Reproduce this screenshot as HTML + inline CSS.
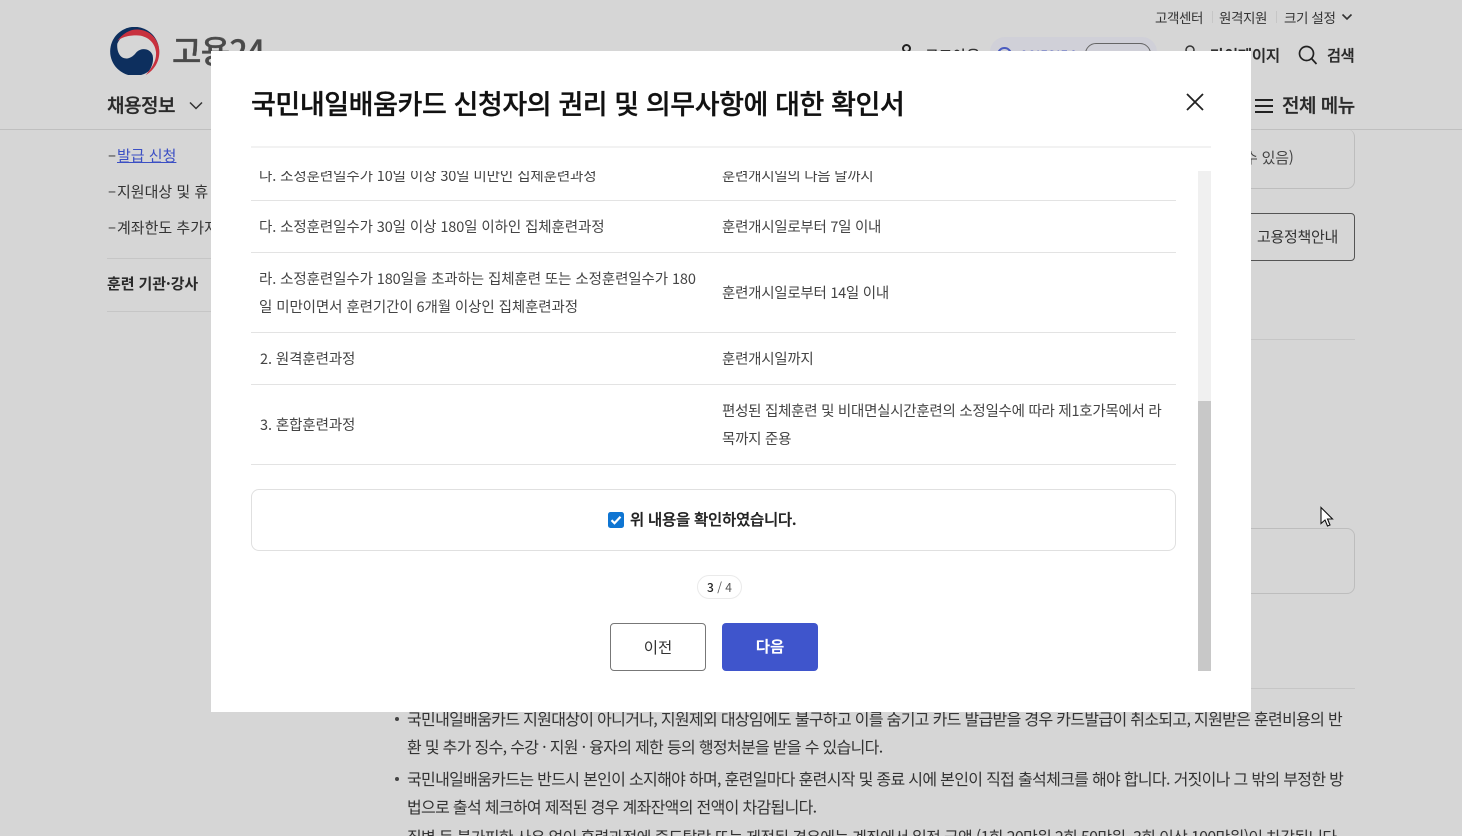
<!DOCTYPE html>
<html lang="ko"><head><meta charset="utf-8"><style>
html,body{margin:0;padding:0;width:1462px;height:836px;overflow:hidden;background:#d6d6d6}
body{position:relative;font-family:"Liberation Sans","Noto Sans CJK KR",sans-serif;color:#2a2a2a}
*{box-sizing:border-box}
.t{position:absolute;white-space:nowrap;height:28px;line-height:28px;font-family:"Noto Sans CJK KR","Liberation Sans",sans-serif}
.l{position:absolute;background:#e3e3e3;height:1px}
.b{position:absolute;background:#bfbfbf;height:1px}
.m{font-size:14.5px;color:#444;letter-spacing:-.1px}
.r{font-size:14.5px;color:#444;letter-spacing:-.27px}
.bt{font-size:16px;color:#333;letter-spacing:-.68px}
.tp{font-size:13.5px;color:#333;letter-spacing:-.4px}
.s{-webkit-text-stroke:.3px currentColor}
</style></head><body>
<!-- background page -->
<div class="t tp" style="left:1155px;top:3px">고객센터</div>
<div class="b" style="left:1212px;top:11px;width:1px;height:12px;background:#c6c6c6"></div>
<div class="t tp" style="left:1219px;top:3px">원격지원</div>
<div class="b" style="left:1276px;top:11px;width:1px;height:12px;background:#c6c6c6"></div>
<div class="t tp" style="left:1284px;top:3px">크기 설정</div>
<svg style="position:absolute;left:1341px;top:12px" width="12" height="10" fill="none" stroke="#333" stroke-width="1.6"><path d="M1.500 2.500l4.500 4.500 4.500-4.500"/></svg>
<svg style="position:absolute;left:110px;top:26.700px" width="50" height="48.700" viewBox="330 80 150 146">
<circle cx="404" cy="153" r="73.500" fill="#0d2f5e"/>
<path d="M352 130C365 100 395 88 415 90C455 95 478 125 478 155C478 185 462 210 437 224C455 205 462 185 458 165C452 145 425 140 410 155C400 168 385 180 368 172C355 165 350 145 352 130Z" fill="#d6d6d6"/>
<path d="M352 122C368 98 395 84 418 88C455 92 478 122 478 155C478 185 462 210 437 224C458 200 470 180 468 155C465 125 440 105 410 105C385 105 365 110 352 122Z" fill="#c8313e"/>
</svg>
<div class="t s" style="left:172px;top:32px;height:36px;line-height:36px;font-size:32px;color:#4a4a4a;font-weight:500;letter-spacing:-.7px">고용24</div>
<div class="t s" style="left:107px;top:91px;font-size:19px;font-weight:500;color:#2a2a2a;letter-spacing:-.5px">채용정보</div>
<svg style="position:absolute;left:188px;top:100px" width="16" height="12" fill="none" stroke="#333" stroke-width="1.500"><path d="M2 2.500l6 6 6-6"/></svg>
<div class="b" style="left:0;top:129px;width:1462px"></div>
<div class="t" style="left:108px;top:141px;font-size:15px;color:#333">–</div>
<div class="t" style="left:117px;top:142px;font-size:15px;color:#3b4fc4;letter-spacing:0;text-decoration:underline">발급 신청</div>
<div class="t" style="left:108px;top:177px;font-size:15px;color:#333">–</div>
<div class="t" style="left:117px;top:178px;font-size:15px;color:#333;letter-spacing:0">지원대상 및 휴</div>
<div class="t" style="left:108px;top:213px;font-size:15px;color:#333">–</div>
<div class="t" style="left:117px;top:214px;font-size:15px;color:#333;letter-spacing:0">계좌한도 추가지</div>
<div class="b" style="left:107px;top:258px;width:110px;background:#c6c6c6"></div>
<div class="t" style="left:107px;top:270px;font-size:15px;font-weight:700;color:#2a2a2a;letter-spacing:-.1px">훈련 기관·강사</div>
<div class="b" style="left:107px;top:311px;width:110px;background:#c6c6c6"></div>
<!-- right side -->
<div style="position:absolute;left:902px;top:44px;width:9px;height:9px;border-radius:50%;border:2px solid #222"></div>
<div class="t" style="left:925px;top:42px;font-size:15px;color:#333;font-weight:500">로그아웃</div>
<div style="position:absolute;left:990px;top:37px;width:167px;height:30px;border-radius:15px;background:#d0d0d8"></div>
<div style="position:absolute;left:997px;top:47px;width:15px;height:15px;border-radius:50%;border:2px solid #4a5bc0"></div>
<div class="t" style="left:1020px;top:42px;font-size:14px;color:#4a5bc0;font-weight:500">00:59:54</div>
<div style="position:absolute;left:1085px;top:43px;width:66px;height:22px;border-radius:11px;border:1px solid #666"></div>
<div class="t" style="left:1096px;top:43px;font-size:11.500px;color:#333">시간연장</div>
<svg style="position:absolute;left:1181px;top:42px" width="18" height="12" fill="none" stroke="#333" stroke-width="1.500"><circle cx="9" cy="8" r="4"/></svg>
<div class="t s" style="left:1210px;top:41px;font-size:15.500px;font-weight:500;color:#2a2a2a;letter-spacing:-.3px">마이페이지</div>
<svg style="position:absolute;left:1298px;top:45px" width="20" height="20" fill="none" stroke="#222" stroke-width="1.700"><circle cx="8.500" cy="8.500" r="7"/><path d="M13.500 13.500l5 5.500"/></svg>
<div class="t s" style="left:1327px;top:41px;font-size:15.200px;font-weight:500;color:#2a2a2a;letter-spacing:-.3px">검색</div>
<svg style="position:absolute;left:1255px;top:98px" width="18" height="16" fill="none" stroke="#222" stroke-width="2"><path d="M0 2h18M0 8h18M0 14h18"/></svg>
<div class="t s" style="left:1282px;top:91px;font-size:19px;font-weight:500;color:#2a2a2a;letter-spacing:-.5px">전체 메뉴</div>
<div style="position:absolute;left:1100px;top:129px;width:255px;height:60px;border:1px solid #bdbdbd;border-top:0;border-radius:0 8px 8px 8px"></div>
<div class="t" style="left:1244px;top:144px;font-size:15px;color:#444;letter-spacing:-.2px">수 있음)</div>
<div style="position:absolute;left:1100px;top:213px;width:255px;height:48px;border:1px solid #555;border-radius:4px"></div>
<div class="t" style="left:1257px;top:223px;font-size:15px;color:#333;letter-spacing:-.3px">고용정책안내</div>
<div class="b" style="left:1100px;top:339px;width:255px;background:#c6c6c6"></div>
<div style="position:absolute;left:1100px;top:528px;width:255px;height:66px;border:1px solid #bdbdbd;border-radius:8px"></div>
<div class="b" style="left:380px;top:688px;width:975px;background:#c6c6c6"></div>
<svg style="position:absolute;left:1319px;top:506px" width="16" height="22" viewBox="0 0 16 22"><path d="M2 1.500v16l4-3.500 2.500 6 2.500-1-2.500-6h5z" fill="#fff" stroke="#111" stroke-width="1.100"/></svg>
<!-- bottom text -->
<div style="position:absolute;left:395px;top:717px;width:4px;height:4px;border-radius:50%;background:#444"></div>
<div class="t bt" style="left:407px;top:704px">국민내일배움카드 지원대상이 아니거나, 지원제외 대상임에도 불구하고 이를 숨기고 카드 발급받을 경우 카드발급이 취소되고, 지원받은 훈련비용의 반</div>
<div class="t bt" style="left:407px;top:732px">환 및 추가 징수, 수강 · 지원 · 융자의 제한 등의 행정처분을 받을 수 있습니다.</div>
<div style="position:absolute;left:395px;top:777px;width:4px;height:4px;border-radius:50%;background:#444"></div>
<div class="t bt" style="left:407px;top:764px">국민내일배움카드는 반드시 본인이 소지해야 하며, 훈련일마다 훈련시작 및 종료 시에 본인이 직접 출석체크를 해야 합니다. 거짓이나 그 밖의 부정한 방</div>
<div class="t bt" style="left:407px;top:792px">법으로 출석 체크하여 제적된 경우 계좌잔액의 전액이 차감됩니다.</div>
<div class="t bt" style="left:407px;top:822px">질병 등 불가피한 사유 없이 훈련과정에 중도탈락 또는 제적된 경우에는 계좌에서 일정 금액 (1회 20만원 2회 50만원, 3회 이상 100만원)이 차감됩니다.</div>
<!-- modal -->
<div style="position:absolute;left:211px;top:51px;width:1040px;height:661px;background:#fff;overflow:hidden">
<div class="t s" style="left:40px;top:36px;height:32px;line-height:32px;font-size:27px;font-weight:500;color:#111;letter-spacing:-.42px">국민내일배움카드 신청자의 권리 및 의무사항에 대한 확인서</div>
<svg style="position:absolute;left:974px;top:41px" width="20" height="20" fill="none" stroke="#222" stroke-width="1.800"><path d="M2 2l16 16M18 2L2 18"/></svg>
<div class="l" style="left:40px;top:95px;width:960px;background:#f2f2f2;height:2px"></div>
<div style="position:absolute;left:0;top:120px;width:1000px;height:500px;overflow:hidden">
<div class="t m" style="left:48px;top:-9px">나. 소정훈련일수가 10일 이상 30일 미만인 집체훈련과정</div>
<div class="t r" style="left:511px;top:-9px">훈련개시일의 다음 날까지</div>
<div class="l" style="left:40px;top:29px;width:925px"></div>
<div class="t m" style="left:48px;top:42px">다. 소정훈련일수가 30일 이상 180일 이하인 집체훈련과정</div>
<div class="t r" style="left:511px;top:42px">훈련개시일로부터 7일 이내</div>
<div class="l" style="left:40px;top:81px;width:925px"></div>
<div class="t m" style="left:48px;top:94px">라. 소정훈련일수가 180일을 초과하는 집체훈련 또는 소정훈련일수가 180</div>
<div class="t m" style="left:48px;top:122px">일 미만이면서 훈련기간이 6개월 이상인 집체훈련과정</div>
<div class="t r" style="left:511px;top:108px">훈련개시일로부터 14일 이내</div>
<div class="l" style="left:40px;top:161px;width:925px"></div>
<div class="t m" style="left:49px;top:174px">2. 원격훈련과정</div>
<div class="t r" style="left:511px;top:174px">훈련개시일까지</div>
<div class="l" style="left:40px;top:213px;width:925px"></div>
<div class="t m" style="left:49px;top:240px">3. 혼합훈련과정</div>
<div class="t r" style="left:511px;top:226px">편성된 집체훈련 및 비대면실시간훈련의 소정일수에 따라 제1호가목에서 라</div>
<div class="t r" style="left:511px;top:254px">목까지 준용</div>
<div class="l" style="left:40px;top:293px;width:925px"></div>
<div style="position:absolute;left:40px;top:318px;width:925px;height:62px;border:1px solid #e0e0e0;border-radius:8px"></div>
<svg style="position:absolute;left:397px;top:341px" width="16" height="16" viewBox="0 0 16 16"><rect width="16" height="16" rx="2.500" fill="#0f75d2"/><path d="M3.500 8.200l3 3 6-6.500" fill="none" stroke="#fff" stroke-width="2.200"/></svg>
<div class="t s" style="left:419px;top:334px;font-size:15.500px;font-weight:500;color:#222;letter-spacing:-.28px">위 내용을 확인하였습니다.</div>
<div class="t" style="left:486px;top:404px;width:45px;height:24px;line-height:23px;border:1px solid #eaeaea;border-radius:12px;text-align:center;font-size:12px;color:#555;font-weight:400"><b style="font-weight:500;color:#222">3</b> / 4</div>
<div class="t" style="left:399px;top:452px;width:96px;height:48px;line-height:46px;border:1px solid #777;border-radius:4px;text-align:center;font-size:15.500px;color:#333">이전</div>
<div class="t" style="left:511px;top:452px;width:96px;height:48px;line-height:46px;background:#3f55cc;border-radius:4px;text-align:center;font-size:15.500px;font-weight:700;color:#fff">다음</div>
<div style="position:absolute;left:987px;top:0;width:13px;height:230px;background:#f0f0f0"></div>
<div style="position:absolute;left:987px;top:230px;width:13px;height:270px;background:#c8c8c8"></div>
</div>
</div>
</body></html>
